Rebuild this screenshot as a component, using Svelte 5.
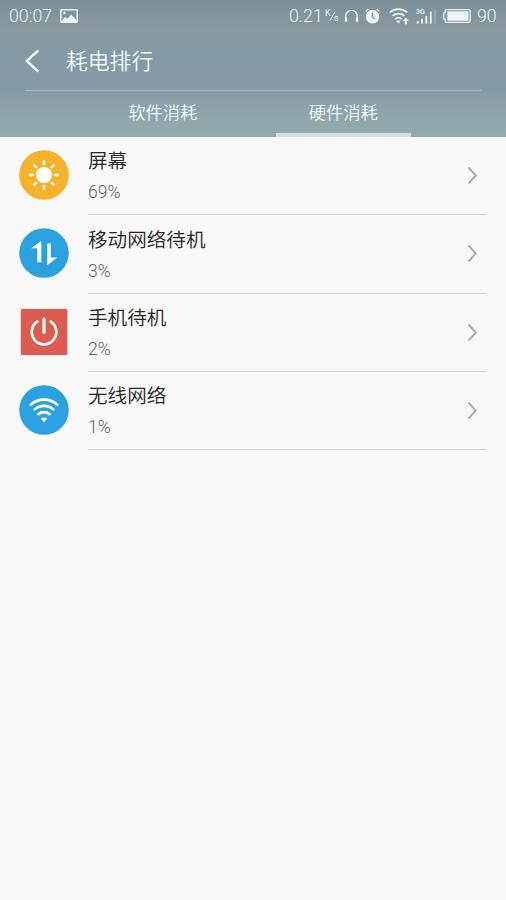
<script lang="ts">
  interface UsageRow {
    icon: "screen" | "mobile" | "power" | "wifi";
    name: string;
    percent: number;
  }

  const tabs = ["软件消耗", "硬件消耗"];
  let active = $state(1);

  const rows: UsageRow[] = [
    { icon: "screen", name: "屏幕", percent: 69 },
    { icon: "mobile", name: "移动网络待机", percent: 3 },
    { icon: "power", name: "手机待机", percent: 2 },
    { icon: "wifi", name: "无线网络", percent: 1 },
  ];

  const rays = [0, 45, 90, 135, 180, 225, 270, 315];
</script>

<div class="screen">
  <header>
    <div class="status">
      <span class="time">00:07</span>
      <svg class="photo" width="18" height="14" viewBox="0 0 18 14">
        <rect x="0.8" y="0.8" width="16.4" height="12.4" rx="0.6" fill="none" stroke="currentColor" stroke-width="1.5" />
        <circle cx="4.4" cy="4" r="1.3" fill="currentColor" />
        <path d="M1 12.5 5.2 8l2.3 1.8L11 5.5l6 6v1.5H1z" fill="currentColor" />
      </svg>
      <span class="speed">0.21</span>
      <span class="unit"><i>K</i><svg width="7" height="13" viewBox="0 0 7 13"><path d="M1 11.5 5.8 3" stroke="currentColor" stroke-width="1" /></svg><i class="low">s</i></span>
      <svg class="headset" width="15" height="14" viewBox="0 0 15 14" fill="none" stroke="currentColor">
        <path d="M1.8 9V7a5.7 5.7 0 0 1 11.4 0v2" stroke-width="1.3" />
        <path d="M2 8.5v4.3M13 8.5v4.3" stroke-width="2.2" />
      </svg>
      <svg class="alarm" width="15" height="16" viewBox="0 0 15 16">
        <circle cx="7.5" cy="8.6" r="6.8" fill="currentColor" />
        <path d="M.8 3.3 3.3 1M11.7 1l2.5 2.3" stroke="currentColor" stroke-width="1.5" />
        <path d="M7.3 4.7v4l2.4 2.4" fill="none" stroke="#84959d" stroke-width="1.3" />
      </svg>
      <svg class="wifi" width="21" height="18" viewBox="0 0 21 18" fill="none" stroke="currentColor" stroke-width="1.7">
        <path d="M.8 5.4a13.2 13.2 0 0 1 17.4 0M3.5 8.9a9.2 9.2 0 0 1 12 0M6.2 12.1a5 5 0 0 1 6.6 0" />
        <path d="m7.4 14.2 2.1 2.3 2.1-2.3q-2.1-1.5-4.2 0z" fill="currentColor" stroke="none" />
        <path d="m13.8 13.9 3-3.3 3 3.3h-1.9v3.3h-2.2v-3.3z" fill="currentColor" stroke="none" />
      </svg>
      <span class="signal">
        <b>3G</b>
        <svg width="20" height="15" viewBox="0 0 20 15">
          <path d="M1.7 12.2v2.5M6 9.8v4.9M10.3 6.9v7.8M14.8 2.4v12.3" stroke="currentColor" stroke-width="1.8" />
          <path d="M19 0v14.7" stroke="currentColor" opacity=".35" />
        </svg>
      </span>
      <svg class="battery" width="28" height="14" viewBox="0 0 28 14">
        <path d="M3.5.7h22.2q1.5 0 1.5 1.5v9.6q0 1.5-1.5 1.5H3.5Q2.2 13.3 2.2 12v-1.8H.8V3.8h1.4V2Q2.2.7 3.5.7z" fill="none" stroke="currentColor" stroke-width="1.2" />
        <rect x="4.3" y="2.3" width="21.2" height="9.4" fill="currentColor" />
      </svg>
      <span class="level">90</span>
    </div>

    <div class="title">
      <svg width="15" height="24" viewBox="0 0 15 24">
        <path d="M13.3 1.3 1.8 12l11.5 10.7" fill="none" stroke="currentColor" stroke-width="2.5" />
      </svg>
      <h1>耗电排行</h1>
    </div>

    <nav>
      {#each tabs as tab, i}
        <button class:active={active === i} onclick={() => (active = i)}>{tab}</button>
      {/each}
    </nav>
  </header>

  <ul>
    {#each rows as row}
      <li>
        <svg class="icon" width="50" height="50" viewBox="0 0 50 50">
          {#if row.icon === "screen"}
            <circle cx="25" cy="25" r="24.8" fill="#f5b32c" />
            <circle cx="25" cy="25" r="8" fill="#fff" />
            {#each rays as angle}
              <path d="M25 11.2v2.8" stroke="#fff" stroke-width="2.4" stroke-linecap="round" transform="rotate({angle} 25 25)" />
            {/each}
          {:else if row.icon === "mobile"}
            <circle cx="25" cy="25" r="24.8" fill="#2ca1df" />
            <path d="M22.3 13v21.2h-4V20.2h-6.1zM28.2 15.4h3.6v14.2h6.4l-10 7.7z" fill="#fff" />
          {:else if row.icon === "power"}
            <rect x="1.8" y="2" width="46.6" height="46" rx="1" fill="#dc5b51" />
            <path d="M18.3 14.7a12.3 12.3 0 1 0 13.4 0" fill="none" stroke="#fff" stroke-width="2.7" stroke-linecap="round" />
            <path d="M25 12.2v13" stroke="#fff" stroke-width="3.2" stroke-linecap="round" />
          {:else}
            <circle cx="25" cy="25" r="24.8" fill="#2ca1df" />
            <path d="M11.8 19.6a20 20 0 0 1 26.4 0M15.7 24.4a14 14 0 0 1 18.6 0M19.4 29.2a8.5 8.5 0 0 1 11.2 0" fill="none" stroke="#fff" stroke-width="2.6" stroke-linecap="round" />
            <path d="m21.8 33.6 3.2 3.6 3.2-3.6q-3.2-2.2-6.4 0z" fill="#fff" />
          {/if}
        </svg>
        <div class="body">
          <div class="text">
            <div class="name">{row.name}</div>
            <div class="percent">{row.percent}%</div>
          </div>
          <svg class="arrow" width="11" height="19" viewBox="0 0 11 19">
            <path d="m1.5 1.5 7.3 8-7.3 8" fill="none" stroke="#aaa" stroke-width="1.9" />
          </svg>
        </div>
      </li>
    {/each}
  </ul>
</div>

<style>
  :global(body) {
    background: #f8f8f8;
  }
  .screen {
    min-height: 900px;
    font-family: Roboto, "Noto Sans CJK SC", sans-serif;
    background: #f8f8f8;
  }
  svg {
    display: block;
    flex: none;
  }

  header {
    height: 137px;
    display: flex;
    flex-direction: column;
    color: #f2faf7;
    background: linear-gradient(
      #7c8f98 0,
      #84969e 20px,
      #89999f 34px,
      #8599a5 50px,
      #8698a5 75px,
      #8599a6 90px,
      #8d9fa8 99px,
      #8da4af 114px,
      #90a8ad 125px,
      #94abaa 137px
    );
  }
  .status {
    height: 32px;
    display: flex;
    align-items: center;
    padding: 0 9px;
    font-size: 17.8px;
    font-weight: 300;
    color: #eef5f4;
  }
  .time,
  .speed,
  .level {
    padding-bottom: 1px;
  }
  .time {
    width: 51px;
  }
  .speed {
    margin-left: auto;
    width: 36px;
  }
  .unit {
    display: flex;
    width: 19px;
    font-size: 9px;
    line-height: 9px;
    font-weight: 400;
  }
  .unit i {
    font-style: normal;
  }
  .unit svg {
    margin: 0 -2px;
  }
  .unit .low {
    padding-top: 5px;
  }
  .alarm {
    margin-left: 6px;
  }
  .wifi {
    margin-left: 9px;
  }
  .signal {
    display: grid;
    margin: 0 7px 0 6px;
  }
  .signal b,
  .signal svg {
    grid-area: 1 / 1;
  }
  .signal b {
    font-size: 7px;
    line-height: 6px;
    font-weight: 500;
  }
  .level {
    width: 20px;
    margin-left: 6px;
  }

  .title {
    height: 59px;
    margin: 0 25px;
    box-sizing: border-box;
    display: flex;
    align-items: center;
    gap: 26px;
    border-bottom: 1px solid #a8b9bf;
  }
  .title svg {
    margin-bottom: 1px;
  }
  h1 {
    margin: 1px 0 0;
    font-size: 21.8px;
    line-height: 30px;
    font-weight: 350;
  }

  nav {
    flex: 1;
    display: flex;
    padding: 0 95px;
    gap: 45px;
  }
  button {
    width: 136px;
    padding: 0;
    border: 0;
    border-bottom: 4px solid transparent;
    background: none;
    font: 350 17.3px/42px "Noto Sans CJK SC", sans-serif;
    color: inherit;
  }
  button.active {
    border-color: #d3dfdf;
  }

  ul {
    margin: 0;
    padding: 0;
    list-style: none;
  }
  li {
    height: 78.25px;
    display: flex;
    padding: 0 20px 0 19px;
  }
  .icon {
    margin: 13px 19px 0 0;
  }
  .body {
    flex: 1;
    display: flex;
    justify-content: space-between;
    border-bottom: 1px solid #d6d8d6;
  }
  .name {
    margin-top: 11.4px;
    font-size: 19.6px;
    line-height: 28px;
    font-weight: 350;
    color: #242624;
  }
  .percent {
    margin-top: 5px;
    font-size: 17.6px;
    line-height: 22px;
    font-weight: 300;
    color: #606260;
  }
  .arrow {
    margin: 29px 8px 0 0;
  }
</style>
